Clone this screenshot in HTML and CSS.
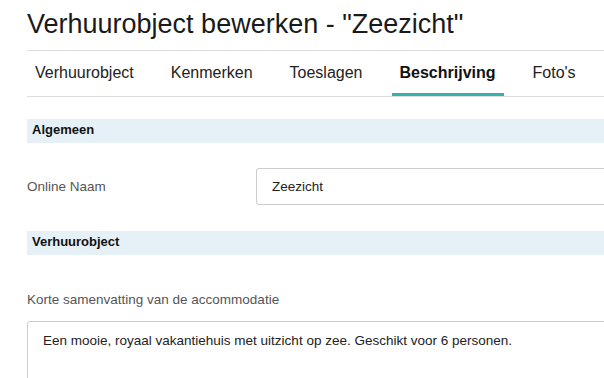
FILE: index.html
```html
<!DOCTYPE html>
<html lang="nl">
<head>
	<meta charset="UTF-8">
	<title>Verhuurobject bewerken</title>
	<link rel="stylesheet" href="styles.css">
</head>
<body>
	<div class="content">
		<h1 class="title">Verhuurobject bewerken - "Zeezicht"</h1>

		<ul class="tabs">
			<li><a href="#">Verhuurobject</a></li>
			<li><a href="#">Kenmerken</a></li>
			<li><a href="#">Toeslagen</a></li>
			<li class="active"><a href="#">Beschrijving</a></li>
			<li><a href="#">Foto's</a></li>
		</ul>

		<form action="">
			<div class="section">Algemeen</div>
			<div class="row">
				<label for="naam">Online Naam</label>
				<input type="text" id="naam" class="field" value="Zeezicht">
			</div>

			<div class="section section-second">Verhuurobject</div>
			<div class="block">
				<label for="samenvatting">Korte samenvatting van de accommodatie</label>
				<textarea id="samenvatting" class="area">Een mooie, royaal vakantiehuis met uitzicht op zee. Geschikt voor 6 personen.</textarea>
			</div>
		</form>
	</div>
</body>
</html>
```
FILE: styles.css
```css
html, body{
	overflow: hidden;
}
body{
	margin: 0;
	font-family: "Liberation Sans", Arial, sans-serif;
	color: #222;
	background: #fff;
}
.content{
	width: 700px;
	padding-left: 27px;
}
.title{
	margin: 0;
	padding: 6px 0 8px;
	font-size: 27px;
	line-height: 36px;
	font-weight: normal;
	color: #1a1a1a;
	border-bottom: 1px solid #ddd;
}
.tabs{
	display: flex;
	gap: 21px;
	margin: 0;
	padding: 0;
	list-style: none;
	border-bottom: 1px solid #ddd;
}
.tabs a{
	display: block;
	padding: 12px 8px 10px;
	font-size: 16px;
	line-height: 20px;
	color: #222;
	text-decoration: none;
	border-bottom: 3px solid transparent;
}
.tabs .active a{
	font-weight: bold;
	color: #111;
	border-bottom-color: #36b0aa;
}
form{
	margin: 0;
}
.section{
	margin-top: 22px;
	padding: 0 5px 2px;
	line-height: 22px;
	font-size: 13px;
	font-weight: bold;
	color: #111;
	background: #e6f0f7;
}
.section-second{
	margin-top: 26px;
}
.row{
	display: flex;
	align-items: center;
	margin-top: 25px;
}
.row label{
	width: 229px;
	font-size: 13.5px;
	line-height: 20px;
	color: #555;
}
.field{
	width: 420px;
	height: 37px;
	box-sizing: border-box;
	padding: 0 15px;
	font-family: inherit;
	font-size: 13.5px;
	color: #222;
	border: 1px solid #ccc;
	border-radius: 3px;
}
.block{
	margin-top: 35px;
}
.block label{
	display: block;
	font-size: 13.5px;
	line-height: 20px;
	color: #555;
}
.area{
	display: block;
	margin-top: 11px;
	width: 660px;
	height: 100px;
	box-sizing: border-box;
	padding: 9px 15px;
	font-family: inherit;
	font-size: 13.5px;
	line-height: 20px;
	color: #222;
	border: 1px solid #ccc;
	border-radius: 3px;
	resize: none;
}
```
